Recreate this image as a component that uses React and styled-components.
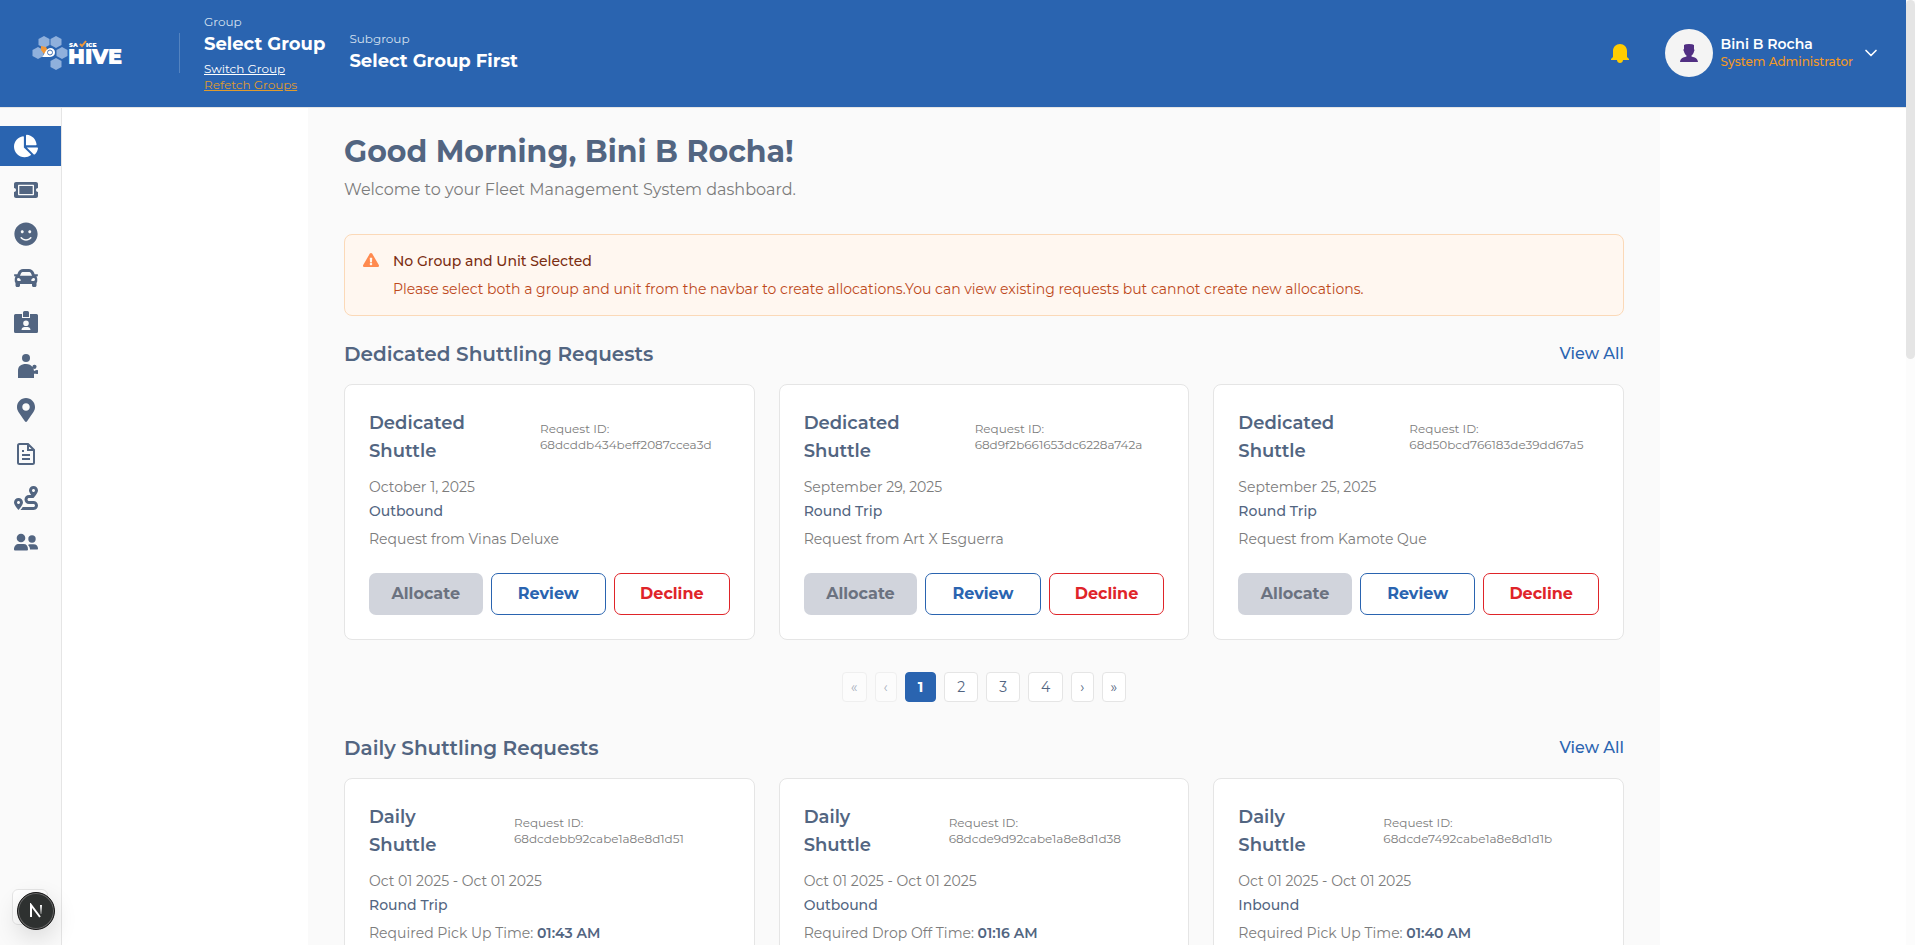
import React from "react";
import styled, { createGlobalStyle, css } from "styled-components";
import {
  FaChartPie,
  FaTicketAlt,
  FaSmile,
  FaCar,
  FaMapMarkerAlt,
  FaRoute,
  FaExclamationTriangle,
} from "react-icons/fa";
import { LuChevronDown } from "react-icons/lu";

const blue = "#2a64b0";
const slate = "#526581";
const gray = "#7c7c7c";
const line = "#e5e5e5";
const surface = "#fafafa";

const GlobalStyle = createGlobalStyle`
  *, *::before, *::after { box-sizing: border-box; }
  body {
    margin: 0;
    background: #fff;
    color: ${slate};
    font-family: Montserrat, Inter, "Liberation Sans", sans-serif;
    font-size: 14px;
    line-height: 20px;
  }
  h1, h2, h3, p { margin: 0; }
  button { font-family: inherit; cursor: pointer; }
  a { color: inherit; }
`;

const Screen = styled.div`
  display: flex;
  height: 100vh;
  overflow: hidden;
`;

const Page = styled.div`
  flex: 1;
  min-width: 0;
  display: flex;
  flex-direction: column;
`;

const ScrollTrack = styled.div`
  flex: none;
  width: 9px;
  background: #fcfcfc;
`;

const ScrollThumb = styled.div`
  height: 38%;
  border-radius: 5px;
  background: #e5e5e5;
`;

const Header = styled.header`
  flex: none;
  display: flex;
  align-items: center;
  height: 108px;
  padding: 0 25px 1px 32px;
  border-bottom: 1px solid ${line};
  background: ${blue};
  color: #fff;
`;

const LogoLink = styled.a`
  display: flex;
  width: 147px;
`;

const HeaderGroups = styled.div`
  display: flex;
  align-items: center;
  gap: 24px;
`;

const HeaderRule = styled.div`
  width: 1px;
  height: 40px;
  background: #5383c0;
`;

const GroupBlock = styled.div`
  display: flex;
  flex-direction: column;
  align-items: flex-start;
`;

const GroupLabel = styled.span`
  font-size: 12px;
  line-height: 16px;
  color: #d4e0ef;
`;

const GroupValue = styled.span`
  font-size: 18px;
  line-height: 28px;
  font-weight: 700;
`;

const GroupLink = styled.a`
  font-size: 12px;
  line-height: 16px;
  color: ${(p) => (p.$accent ? "#e09b2c" : "#fff")};
`;

const LinkStack = styled.div`
  display: flex;
  flex-direction: column;
  align-items: flex-start;
  padding-top: 3px;
`;

const UserArea = styled.div`
  display: flex;
  align-items: center;
  gap: 36px;
  margin-left: auto;
`;

const IconButton = styled.button`
  display: flex;
  padding: 0;
  border: 0;
  background: none;
`;

const UserButton = styled.button`
  display: flex;
  align-items: center;
  gap: 8px;
  padding: 0;
  border: 0;
  background: none;
  color: #fff;
  text-align: left;
`;

const Avatar = styled.span`
  display: flex;
  align-items: center;
  justify-content: center;
  width: 48px;
  height: 48px;
  border-radius: 50%;
  background: #f4f4f4;
`;

const UserText = styled.span`
  display: flex;
  flex-direction: column;
`;

const UserName = styled.span`
  font-size: 14px;
  line-height: 18px;
  font-weight: 600;
`;

const UserRole = styled.span`
  font-size: 12px;
  line-height: 18px;
  font-weight: 500;
  color: #f59a23;
`;

const Body = styled.div`
  flex: 1;
  min-height: 0;
  display: flex;
`;

const Sidebar = styled.nav`
  flex: none;
  display: flex;
  flex-direction: column;
  gap: 4px;
  width: 62px;
  padding-top: 18px;
  border-right: 1px solid ${line};
  background: ${surface};
`;

const NavItem = styled.a`
  display: flex;
  align-items: center;
  height: 40px;
  padding-left: 14px;
  color: ${(p) => (p.$active ? "#fff" : slate)};
  background: ${(p) => (p.$active ? blue : "transparent")};
`;

const Main = styled.main`
  flex: 1;
  min-width: 0;
  overflow: hidden;
`;

const Container = styled.div`
  max-width: 1352px;
  min-height: 100%;
  margin: 0 auto;
  padding: 24px 36px;
  background: ${surface};
`;

const Title = styled.h1`
  font-size: 30px;
  line-height: 40px;
  font-weight: 700;
`;

const Subtitle = styled.p`
  margin: 6px 0 32px;
  font-size: 16px;
  line-height: 24px;
  color: ${gray};
`;

const Alert = styled.section`
  display: flex;
  gap: 12px;
  padding: 16px;
  margin-bottom: 24px;
  border: 1px solid #fbd9b8;
  border-radius: 8px;
  background: #fff7f0;
`;

const AlertIcon = styled.div`
  display: flex;
  justify-content: center;
  width: 20px;
  padding-top: 1px;
  color: #ff8a4f;
`;

const AlertText = styled.div`
  display: flex;
  flex-direction: column;
  gap: 8px;
`;

const AlertTitle = styled.h3`
  font-size: 14px;
  line-height: 20px;
  font-weight: 500;
  color: #7b2e12;
`;

const AlertBody = styled.p`
  font-size: 14px;
  line-height: 20px;
  color: #bd491b;
`;

const SectionHead = styled.div`
  display: flex;
  align-items: center;
  justify-content: space-between;
  margin-bottom: 16px;
`;

const SectionTitle = styled.h2`
  font-size: 20px;
  line-height: 28px;
  font-weight: 600;
`;

const ViewAll = styled.a`
  font-size: 16px;
  line-height: 24px;
  font-weight: 500;
  color: ${blue};
  text-decoration: none;
`;

const CardGrid = styled.div`
  display: grid;
  grid-template-columns: repeat(3, minmax(0, 1fr));
  gap: 24px;
`;

const Card = styled.article`
  padding: 24px;
  border: 1px solid ${line};
  border-radius: 8px;
  background: #fff;
`;

const CardHead = styled.div`
  display: grid;
  grid-template-columns: ${(p) => (p.$wide ? "171px" : "145px")} 1fr;
  align-items: center;
  margin-bottom: 12px;
`;

const CardTitle = styled.h3`
  width: min-content;
  font-size: 18px;
  line-height: 28px;
  font-weight: 600;
`;

const RequestId = styled.p`
  font-size: 12px;
  line-height: 16px;
  color: ${gray};
`;

const CardLine = styled.p`
  font-size: 14px;
  color: ${(p) => (p.$strong ? slate : gray)};
  font-weight: ${(p) => (p.$strong ? 500 : 400)};
  margin-bottom: ${(p) => (p.$strong ? "8px" : "4px")};
`;

const Time = styled.strong`
  font-weight: 600;
  color: ${slate};
`;

const Actions = styled.div`
  display: flex;
  gap: 8px;
  margin-top: 24px;
`;

const variants = {
  muted: css`
    border: 0;
    background: #d1d4dc;
    color: #6b7280;
  `,
  primary: css`
    border: 1px solid ${blue};
    background: #fff;
    color: ${blue};
  `,
  danger: css`
    border: 1px solid #df2429;
    background: #fff;
    color: #df2429;
  `,
};

const ActionButton = styled.button`
  flex: 1 1 0;
  box-sizing: border-box;
  height: 42px;
  padding: 0;
  border-radius: 7px;
  font-size: 16px;
  line-height: 24px;
  font-weight: 700;
  ${(p) => variants[p.$variant]}
`;

const Pagination = styled.nav`
  display: flex;
  justify-content: center;
  gap: 8px;
  margin: 32px 0;
`;

const PageButton = styled.button`
  height: 30px;
  padding: 0 ${(p) => (p.$arrow ? "8px" : "12px")};
  border: 1px solid ${(p) => (p.$current ? blue : line)};
  border-radius: 4px;
  background: ${(p) => (p.$current ? blue : "#fff")};
  color: ${(p) => (p.$current ? "#fff" : slate)};
  font-size: 14px;
  line-height: 20px;
  font-weight: ${(p) => (p.$current ? 700 : 400)};
  &:disabled { opacity: 0.5; }
`;

const DevTools = styled.div`
  position: fixed;
  left: 12px;
  bottom: 16px;
  width: 40px;
  height: 40px;
`;

const DevPlate = styled.div`
  width: 36px;
  height: 36px;
  border: 1px solid ${line};
  border-radius: 6px;
  background: #fff;
`;

const DevButton = styled.button`
  position: absolute;
  top: 3px;
  left: 5px;
  display: flex;
  align-items: center;
  justify-content: center;
  width: 38px;
  height: 38px;
  padding: 0;
  border: 1px solid #171717;
  border-radius: 50%;
  background: #2e3130;
  box-shadow: inset 0 0 0 1px #6b6b6b, 0 8px 24px rgba(0, 0, 0, 0.14);
`;

const LogoText = styled.text`
  font-family: Montserrat, Inter, sans-serif;
  font-weight: 900;
  fill: #fff;
`;

function Logo() {
  const cells = [[12, 6], [24, 6], [6, 17], [30, 17], [24, 28]];
  return (
    <svg width="92" height="35" viewBox="0 0 92 35" role="img" aria-label="Savvice Hive">
      <g fill="#8fb0dc">
        {cells.map(([x, y]) => (
          <path key={`${x}-${y}`} d={`M${x} ${y - 6}l5.500 3v6l-5.500 3l-5.500 -3v-6z`} />
        ))}
      </g>
      <path d="M9 10l5 1 2 4-4 3-3-4z" fill="#f0983a" />
      <path d="M10 21c3-2 3-9 9-9 5 0 6 9-1 9z" fill="#fff" />
      <circle cx="18" cy="16.500" r="2.500" fill="none" stroke="#4773b3" />
      <LogoText x="37" y="11" fontSize="6">SA</LogoText>
      <LogoText x="54" y="11" fontSize="6">ICE</LogoText>
      <LogoText x="36" y="28" fontSize="21">HIVE</LogoText>
      <path d="M48 8l2 2 4-5" fill="none" stroke="#f0983a" strokeWidth="2" />
    </svg>
  );
}

const BellIcon = () => (
  <svg width="18" height="19" viewBox="0 0 18 19" fill="#ffcc00" aria-hidden="true">
    <path d="M9 0C5 0 2 3 2 7v6L0 15v1h6c0 4 6 4 6 0h6v-1l-2-2V7c0-4-3-7-7-7z" />
  </svg>
);

const PersonIcon = () => (
  <svg width="18" height="19" viewBox="0 0 18 19" fill="#512f83" aria-hidden="true">
    <path d="M4 1q1-1 5-1t5 1v4q1 1 0 2.500c-.5 2-1.500 3.500-2.500 4v1c4 1 6 2 6.500 5.500H0c.5-3.500 2.500-4.500 6.500-5.500v-1C5.500 11 4.500 9.500 4 7.500 3 6 3.500 5 4 5z" />
  </svg>
);

const BadgeIcon = () => (
  <svg width="24" height="24" viewBox="0 0 24 24" fill="currentColor" aria-hidden="true">
    <path fillRule="evenodd" d="M9 2.500q0-1.500 1.500-1.500h3Q15 1 15 2.500V7H9zM1.500 4H8v4h8V4h6.500Q24 4 24 5.500v16q0 1.500-1.500 1.500h-21Q0 23 0 21.500v-16Q0 4 1.500 4zM12 10.500a2.800 2.800 0 1 0 0 5.600 2.800 2.800 0 0 0 0-5.600zM7.500 20h9c0-2-1.500-3-3-3h-3c-1.500 0-3 1-3 3z" />
  </svg>
);

const CarerIcon = () => (
  <svg width="24" height="24" viewBox="0 0 24 24" fill="currentColor" aria-hidden="true">
    <circle cx="12" cy="4" r="4" />
    <path d="M4 24v-7c0-5 3-7 8-7 3 0 5 1 6.500 3a2 2 0 1 1 1 1.500L20 17c1 0 1-1 3-1a2 2 0 1 1-1 3.800H20V24z" />
  </svg>
);

const DocumentIcon = () => (
  <svg width="24" height="24" viewBox="0 0 24 24" fill="none" stroke="currentColor" strokeWidth="2" aria-hidden="true">
    <path d="M5.500 2H14l6 6v12.500q0 1.500-1.500 1.500h-13Q4 22 4 20.500v-17Q4 2 5.500 2zM14 2v6h6M8 13h8M8 17h8M8 9h2" />
  </svg>
);

const PeopleIcon = () => (
  <svg width="24" height="24" viewBox="0 0 24 24" fill="currentColor" aria-hidden="true">
    <circle cx="7" cy="8" r="4.300" />
    <circle cx="18" cy="9" r="3.700" />
    <path d="M0 19.500C0 16 2 14 5 14h4.500c3 0 4.500 2 4.500 5.500q0 1-1 1H1q-1 0-1-1zM14 14.900c1-.6 2-.7 5.500-.7 3 0 4.500 2 4.500 4.300 0 .7-.3 1-1 1h-7c0-2-.7-3.500-2-4.600z" />
  </svg>
);

const NextIcon = () => (
  <svg width="16" height="16" viewBox="0 0 16 16" fill="none" strokeWidth="2" aria-hidden="true">
    <defs>
      <linearGradient id="fade" x1="0" y1="0" x2="0" y2="1">
        <stop offset="0" stopColor="#fff" />
        <stop offset="1" stopColor="#fff" stopOpacity="0.2" />
      </linearGradient>
    </defs>
    <path d="M3 14V2l9 12" stroke="#fff" />
    <path d="M12 2h2v9h-2z" fill="url(#fade)" />
  </svg>
);

const navItems = [
  { label: "Dashboard", Icon: FaChartPie },
  { label: "Tickets", Icon: FaTicketAlt },
  { label: "Passengers", Icon: FaSmile },
  { label: "Vehicles", Icon: FaCar },
  { label: "Drivers", Icon: BadgeIcon },
  { label: "Operators", Icon: CarerIcon },
  { label: "Locations", Icon: FaMapMarkerAlt },
  { label: "Reports", Icon: DocumentIcon },
  { label: "Routes", Icon: FaRoute },
  { label: "Users", Icon: PeopleIcon },
];

const dedicated = [
  { id: "68dcddb434beff2087ccea3d", date: "October 1, 2025", trip: "Outbound", note: "Request from Vinas Deluxe" },
  { id: "68d9f2b661653dc6228a742a", date: "September 29, 2025", trip: "Round Trip", note: "Request from Art X Esguerra" },
  { id: "68d50bcd766183de39dd67a5", date: "September 25, 2025", trip: "Round Trip", note: "Request from Kamote Que" },
];

const daily = [
  { id: "68dcdebb92cabe1a8e8d1d51", date: "Oct 01 2025 - Oct 01 2025", trip: "Round Trip", note: "Required Pick Up Time: ", time: "01:43 AM" },
  { id: "68dcde9d92cabe1a8e8d1d38", date: "Oct 01 2025 - Oct 01 2025", trip: "Outbound", note: "Required Drop Off Time: ", time: "01:16 AM" },
  { id: "68dcde7492cabe1a8e8d1d1b", date: "Oct 01 2025 - Oct 01 2025", trip: "Inbound", note: "Required Pick Up Time: ", time: "01:40 AM" },
];

function RequestCard({ kind, request }) {
  return (
    <Card>
      <CardHead $wide={kind === "Dedicated"}>
        <CardTitle>{kind} Shuttle</CardTitle>
        <RequestId>
          Request ID:
          <br />
          {request.id}
        </RequestId>
      </CardHead>
      <CardLine>{request.date}</CardLine>
      <CardLine $strong>{request.trip}</CardLine>
      <CardLine>
        {request.note}
        {request.time && <Time>{request.time}</Time>}
      </CardLine>
      {!request.time && (
        <Actions>
          <ActionButton $variant="muted" disabled>Allocate</ActionButton>
          <ActionButton $variant="primary">Review</ActionButton>
          <ActionButton $variant="danger">Decline</ActionButton>
        </Actions>
      )}
    </Card>
  );
}

function RequestSection({ kind, requests }) {
  return (
    <section>
      <SectionHead>
        <SectionTitle>{kind} Shuttling Requests</SectionTitle>
        <ViewAll href="#all">View All</ViewAll>
      </SectionHead>
      <CardGrid>
        {requests.map((r) => (
          <RequestCard key={r.id} kind={kind} request={r} />
        ))}
      </CardGrid>
    </section>
  );
}

export default function App() {
  return (
    <>
      <GlobalStyle />
      <Screen>
        <Page>
          <Header>
            <LogoLink href="#home"><Logo /></LogoLink>
            <HeaderGroups>
              <HeaderRule />
              <GroupBlock>
                <GroupLabel>Group</GroupLabel>
                <GroupValue>Select Group</GroupValue>
                <LinkStack>
                  <GroupLink href="#switch">Switch Group</GroupLink>
                  <GroupLink href="#refetch" $accent>Refetch Groups</GroupLink>
                </LinkStack>
              </GroupBlock>
              <GroupBlock>
                <GroupLabel>Subgroup</GroupLabel>
                <GroupValue>Select Group First</GroupValue>
              </GroupBlock>
            </HeaderGroups>
            <UserArea>
              <IconButton aria-label="Notifications"><BellIcon /></IconButton>
              <UserButton>
                <Avatar><PersonIcon /></Avatar>
                <UserText>
                  <UserName>Bini B Rocha</UserName>
                  <UserRole>System Administrator</UserRole>
                </UserText>
                <LuChevronDown size={20} />
              </UserButton>
            </UserArea>
          </Header>
          <Body>
            <Sidebar aria-label="Main">
              {navItems.map(({ label, Icon }, i) => (
                <NavItem key={label} href="#nav" $active={i === 0} aria-label={label}>
                  <Icon size={24} />
                </NavItem>
              ))}
            </Sidebar>
            <Main>
              <Container>
                <Title>Good Morning, Bini B Rocha!</Title>
                <Subtitle>Welcome to your Fleet Management System dashboard.</Subtitle>
                <Alert>
                  <AlertIcon><FaExclamationTriangle size={16} /></AlertIcon>
                  <AlertText>
                    <AlertTitle>No Group and Unit Selected</AlertTitle>
                    <AlertBody>
                      Please select both a group and unit from the navbar to create allocations.You can view existing requests but cannot create new allocations.
                    </AlertBody>
                  </AlertText>
                </Alert>
                <RequestSection kind="Dedicated" requests={dedicated} />
                <Pagination aria-label="Dedicated requests pages">
                  <PageButton $arrow disabled>«</PageButton>
                  <PageButton $arrow disabled>‹</PageButton>
                  <PageButton $current>1</PageButton>
                  <PageButton>2</PageButton>
                  <PageButton>3</PageButton>
                  <PageButton>4</PageButton>
                  <PageButton $arrow>›</PageButton>
                  <PageButton $arrow>»</PageButton>
                </Pagination>
                <RequestSection kind="Daily" requests={daily} />
              </Container>
            </Main>
          </Body>
        </Page>
        <ScrollTrack><ScrollThumb /></ScrollTrack>
      </Screen>
      <DevTools>
        <DevPlate />
        <DevButton aria-label="Open developer tools"><NextIcon /></DevButton>
      </DevTools>
    </>
  );
}
